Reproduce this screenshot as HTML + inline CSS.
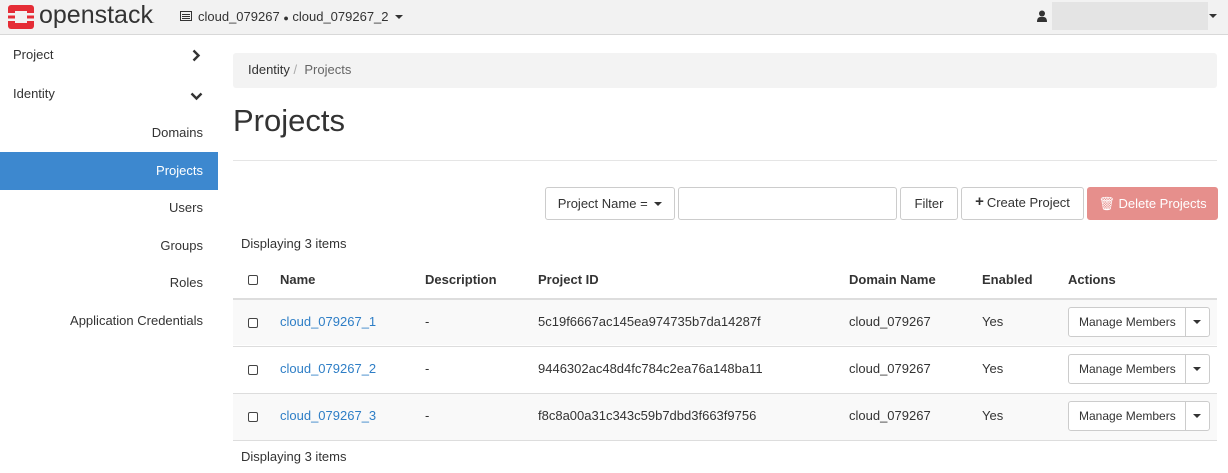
<!DOCTYPE html>
<html><head><meta charset="utf-8"><style>
*{box-sizing:border-box;margin:0;padding:0}
body{width:1228px;height:473px;overflow:hidden;font-family:"Liberation Sans",sans-serif;font-size:13px;color:#333;background:#fff;position:relative}
.nav{position:absolute;left:0;top:0;width:1228px;height:35px;background:#f2f2f2;border-bottom:1px solid #d8d8d8}
.a{position:absolute}
.side div{position:absolute;font-size:13px;color:#333}
.btn{position:absolute;border:1px solid #ccc;border-radius:3px;background:#fff;height:33px;font-size:13px;display:flex;align-items:center;justify-content:center}
.row{position:absolute;left:233px;width:984px;height:47px;border-top:1px solid #ddd}
.cell{position:absolute;font-size:13px}
a{color:#2e7ec6;text-decoration:none}
.cb{position:absolute;width:10px;height:10px;border:1px solid #444;border-radius:2px;background:#fff}
.mm{position:absolute;left:1068px;width:142px;height:30px;border:1px solid #ccc;border-radius:3px;background:#fff;font-size:12px}
.car{position:absolute;width:0;height:0;border-left:4px solid transparent;border-right:4px solid transparent;border-top:4px solid #333}
</style></head><body>
<div class="nav">
<svg class="a" style="left:8px;top:5px" width="26" height="24" viewBox="0 0 26 24"><rect x="0" y="0" width="26" height="24" rx="3" fill="#e52d36"/><rect x="7" y="6" width="12" height="12" fill="#f2f2f2"/><rect x="0" y="8" width="7" height="2.5" fill="#f2f2f2"/><rect x="0" y="13.5" width="7" height="2.5" fill="#f2f2f2"/><rect x="19" y="8" width="7" height="2.5" fill="#f2f2f2"/><rect x="19" y="13.5" width="7" height="2.5" fill="#f2f2f2"/></svg>
<div class="a" style="left:39px;top:1px;font-size:25px;color:#333;letter-spacing:0px">openstack<span style="font-size:6px">.</span></div>
<svg class="a" style="left:180px;top:11px" width="12" height="10"><rect x="0.5" y="0.5" width="11" height="9" fill="none" stroke="#333"/><rect x="2" y="3" width="8" height="1" fill="#333"/><rect x="2" y="5" width="8" height="1" fill="#333"/><rect x="2" y="7" width="8" height="1" fill="#333"/></svg>
<div class="a" style="left:198px;top:9px;font-size:13px">cloud_079267 <span style="font-size:9px">●</span> cloud_079267_2</div>
<div class="car" style="left:395px;top:15px"></div>
<svg class="a" style="left:1037px;top:10px" width="10" height="12"><circle cx="5" cy="3.5" r="3" fill="#333"/><path d="M0 12 Q0 6 5 7 Q10 6 10 12Z" fill="#333"/></svg>
<div class="a" style="left:1052px;top:2px;width:156px;height:28px;background:#e4e4e4"></div>
<div class="car" style="left:1209px;top:14px"></div>
</div>
<div class="side">
<div style="left:13px;top:47px">Project</div>
<div style="left:13px;top:86px">Identity</div>
<div style="right:1025px;top:125px">Domains</div>
<div style="left:0;top:152px;width:218px;height:38px;background:#3d88cf"></div>
<div style="right:1025px;top:163px;color:#fff">Projects</div>
<div style="right:1025px;top:200px">Users</div>
<div style="right:1025px;top:238px">Groups</div>
<div style="right:1025px;top:275px">Roles</div>
<div style="right:1025px;top:313px">Application Credentials</div>
</div>
<svg class="a" style="left:192px;top:49px" width="9" height="13"><path d="M1.5 1.5 L6.5 6.5 L1.5 11.5" stroke="#333" stroke-width="2.4" fill="none"/></svg>
<svg class="a" style="left:190px;top:92px" width="13" height="9"><path d="M1.5 1.5 L6.5 6.5 L11.5 1.5" stroke="#333" stroke-width="2.4" fill="none"/></svg>
<div class="a" style="left:233px;top:53px;width:984px;height:35px;background:#f3f3f3;border-radius:3px"></div>
<div class="a" style="left:248px;top:62px">Identity <span style="color:#aaa">/</span>&nbsp; <span style="color:#666">Projects</span></div>
<div class="a" style="left:233px;top:103px;font-size:31px">Projects</div>
<div class="a" style="left:233px;top:160px;width:984px;height:1px;background:#e5e5e5"></div>
<div class="btn" style="left:545px;top:187px;width:130px">Project Name =&nbsp;<span class="car" style="position:relative;display:inline-block;margin-left:3px"></span></div>
<div class="btn" style="left:678px;top:187px;width:219px"></div>
<div class="btn" style="left:900px;top:187px;width:58px">Filter</div>
<div class="btn" style="left:961px;top:187px;width:123px;align-items:flex-start;padding-top:7px"><b style="font-size:15px;line-height:13px;margin-right:3px">+</b>Create Project</div>
<div class="btn" style="left:1087px;top:187px;width:131px;background:#e68f8c;border-color:#e68f8c;color:#fff">🗑 Delete Projects</div>
<div class="a" style="left:241px;top:236px">Displaying 3 items</div>
<div class="cb" style="left:248px;top:275px"></div>
<div class="cell" style="left:280px;top:272px;font-weight:bold">Name</div>
<div class="cell" style="left:425px;top:272px;font-weight:bold">Description</div>
<div class="cell" style="left:538px;top:272px;font-weight:bold">Project ID</div>
<div class="cell" style="left:849px;top:272px;font-weight:bold">Domain Name</div>
<div class="cell" style="left:982px;top:272px;font-weight:bold">Enabled</div>
<div class="cell" style="left:1068px;top:272px;font-weight:bold">Actions</div>
<div class="row" style="top:298px;background:#f9f9f9;border-top:2px solid #ddd"></div>
<div class="row" style="top:346px"></div>
<div class="row" style="top:393px;background:#f9f9f9"></div>
<div class="row" style="top:440px;height:1px"></div>
<div class="cb" style="left:248px;top:318px"></div><div class="cell" style="left:280px;top:314px"><a>cloud_079267_1</a></div><div class="cell" style="left:425px;top:314px">-</div><div class="cell" style="left:538px;top:314px">5c19f6667ac145ea974735b7da14287f</div><div class="cell" style="left:849px;top:314px">cloud_079267</div><div class="cell" style="left:982px;top:314px">Yes</div>
<div class="cb" style="left:248px;top:365px"></div><div class="cell" style="left:280px;top:361px"><a>cloud_079267_2</a></div><div class="cell" style="left:425px;top:361px">-</div><div class="cell" style="left:538px;top:361px">9446302ac48d4fc784c2ea76a148ba11</div><div class="cell" style="left:849px;top:361px">cloud_079267</div><div class="cell" style="left:982px;top:361px">Yes</div>
<div class="cb" style="left:248px;top:412px"></div><div class="cell" style="left:280px;top:408px"><a>cloud_079267_3</a></div><div class="cell" style="left:425px;top:408px">-</div><div class="cell" style="left:538px;top:408px">f8c8a00a31c343c59b7dbd3f663f9756</div><div class="cell" style="left:849px;top:408px">cloud_079267</div><div class="cell" style="left:982px;top:408px">Yes</div>
<div class="mm" style="top:307px"><span class="a" style="left:10px;top:7px">Manage Members</span><span class="a" style="left:116px;top:0;height:28px;border-left:1px solid #ccc"></span><span class="car" style="left:124px;top:12px"></span></div>
<div class="mm" style="top:354px"><span class="a" style="left:10px;top:7px">Manage Members</span><span class="a" style="left:116px;top:0;height:28px;border-left:1px solid #ccc"></span><span class="car" style="left:124px;top:12px"></span></div>
<div class="mm" style="top:401px"><span class="a" style="left:10px;top:7px">Manage Members</span><span class="a" style="left:116px;top:0;height:28px;border-left:1px solid #ccc"></span><span class="car" style="left:124px;top:12px"></span></div>
<div class="a" style="left:241px;top:449px">Displaying 3 items</div>
</body></html>
